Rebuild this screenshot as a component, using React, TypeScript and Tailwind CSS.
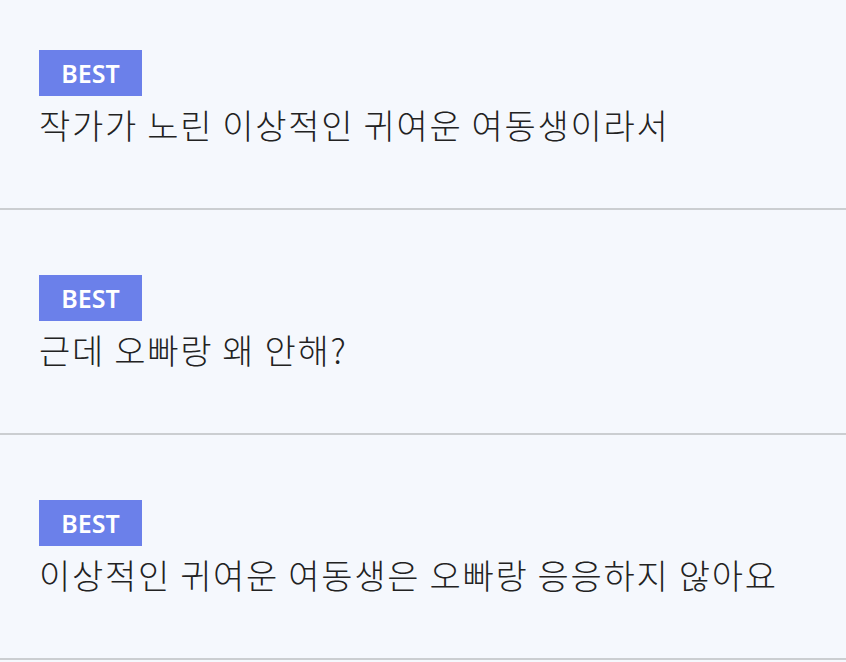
import React from "react"

const comments = [
  "작가가 노린 이상적인 귀여운 여동생이라서",
  "근데 오빠랑 왜 안해?",
  "이상적인 귀여운 여동생은 오빠랑 응응하지 않아요",
]

const BestComment = ({ text }: { text: string }) => {
  return (
    <div className="border-b-2 border-[#cbced1] pt-[65px] pb-[56px] pl-[39px]">
      <div className="flex h-[46px] w-[103px] items-center justify-center bg-[#6b80ea]">
        <span className="text-[25px] font-semibold leading-none text-white [font-family:'Noto_Sans',sans-serif]">
          BEST
        </span>
      </div>
      <p className="h-[56px] text-[34px] font-light leading-[57px] tracking-[1.7px] text-[#222222] [font-family:'Noto_Sans_CJK_KR',sans-serif]">
        {text}
      </p>
    </div>
  )
}

export default function App() {
  return (
    <div className="h-[662px] w-[846px] overflow-hidden bg-[#f5f8fd]">
      <div className="-mt-[15px]">
        {comments.map((c, i) => (
          <BestComment key={i} text={c} />
        ))}
      </div>
    </div>
  )
}
